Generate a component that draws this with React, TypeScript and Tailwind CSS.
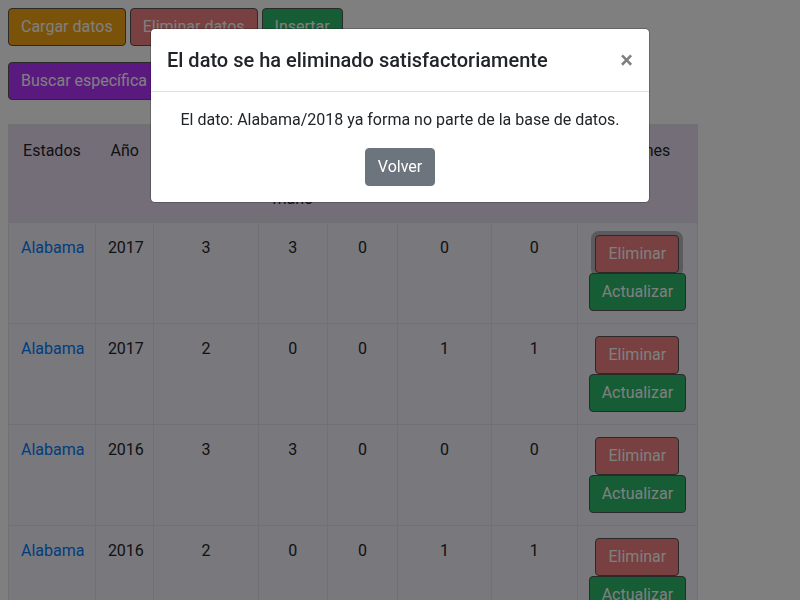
import React from "react";

type Registro = {
  estado: string;
  anio: number;
  valores: number[];
};

const COLUMNAS = [
  { titulo: "Estados", ancho: "w-[86px]" },
  { titulo: "Año", ancho: "w-[58px]" },
  { titulo: "Total de incidentes", ancho: "w-[103px]" },
  { titulo: "Armas de mano", ancho: "w-[69px]" },
  { titulo: "Armas largas", ancho: "w-[69px]" },
  { titulo: "Armas robadas", ancho: "w-[93px]" },
  { titulo: "Armas legales", ancho: "w-[85px]" },
  { titulo: "Acciones", ancho: "w-[119px]" },
];

const REGISTROS: Registro[] = [
  { estado: "Alabama", anio: 2017, valores: [3, 3, 0, 0, 0] },
  { estado: "Alabama", anio: 2017, valores: [2, 0, 0, 1, 1] },
  { estado: "Alabama", anio: 2016, valores: [3, 3, 0, 0, 0] },
  { estado: "Alabama", anio: 2016, valores: [2, 0, 0, 1, 1] },
  { estado: "Alabama", anio: 2015, valores: [1, 1, 0, 0, 0] },
];

const btn = "inline-block px-3 py-1.5 text-base leading-6 text-white border border-[#555] rounded-[4px]";

// text cells sit a pixel lower than the action buttons
const celda = "border border-[#dee2e6] px-3 pt-[13px] pb-[11px]";

function Fila({ r, foco }: { r: Registro; foco: boolean }) {
  return (
    <tr className="bg-[#f3f0f8]">
      <td className={celda}>
        <a className="text-[#007bff]">{r.estado}</a>
      </td>
      <td className={celda}>{r.anio}</td>
      {r.valores.map((v, i) => (
        <td key={i} className={celda}>
          {v}
        </td>
      ))}
      <td className="border border-[#dee2e6] p-3">
        <div className="flex flex-col items-center">
          <button
            className={`${btn} bg-[#f08080] ${foco ? "ring-4 ring-[#b4b4be]" : ""}`}
          >
            Eliminar
          </button>
          <button className={`${btn} bg-[#2cb868]`}>Actualizar</button>
        </div>
      </td>
    </tr>
  );
}

export default function App() {
  return (
    <div className="relative min-h-screen bg-white p-2 text-base leading-6 text-[#212529] font-['Roboto','Liberation_Sans',sans-serif]">
      <div className="flex gap-[4px]">
        <button className={`${btn} bg-[#f4a414]`}>Cargar datos</button>
        <button className={`${btn} bg-[#f08080]`}>Eliminar datos</button>
        <button className={`${btn} bg-[#2cb868]`}>Insertar</button>
      </div>
      <div className="mt-[16px] flex gap-[4px]">
        <button className={`${btn} bg-[#b533fe]`}>Buscar específica</button>
      </div>

      <table className="mt-[24px] w-[690px] table-fixed border-collapse text-center">
        <colgroup>
          {COLUMNAS.map((c) => (
            <col key={c.titulo} className={c.ancho} />
          ))}
        </colgroup>
        <thead>
          <tr className="bg-[#e9ddf3]">
            {COLUMNAS.map((c) => (
              <th
                key={c.titulo}
                className="border border-b-2 border-[#dee2e6] px-3 pt-[14px] pb-[10px] align-top font-normal"
              >
                {c.titulo}
              </th>
            ))}
          </tr>
        </thead>
        <tbody className="align-top">
          {REGISTROS.map((r, i) => (
            <Fila key={i} r={r} foco={i === 0} />
          ))}
        </tbody>
      </table>

      {/* backdrop + modal */}
      <div className="fixed inset-0 bg-black/50" />
      <div className="fixed left-1/2 top-[28px] w-[500px] -translate-x-1/2 rounded-[5px] border border-black/20 bg-white bg-clip-padding">
        <div className="flex items-start justify-between border-b border-[#dee2e6] p-4">
          <h5 className="text-xl font-medium leading-[30px]">
            El dato se ha eliminado satisfactoriamente
          </h5>
          <button className="-m-4 ml-auto p-4 pt-[19px] text-2xl font-semibold leading-none text-black opacity-50">
            ×
          </button>
        </div>
        <div className="p-4 text-center">
          <p className="mb-4">
            El dato: Alabama/2018 ya forma no parte de la base de datos.
          </p>
          <button className="inline-block rounded-[4px] border border-[#6c757d] bg-[#6c757d] px-3 py-1.5 text-base leading-6 text-white">
            Volver
          </button>
        </div>
      </div>
    </div>
  );
}
